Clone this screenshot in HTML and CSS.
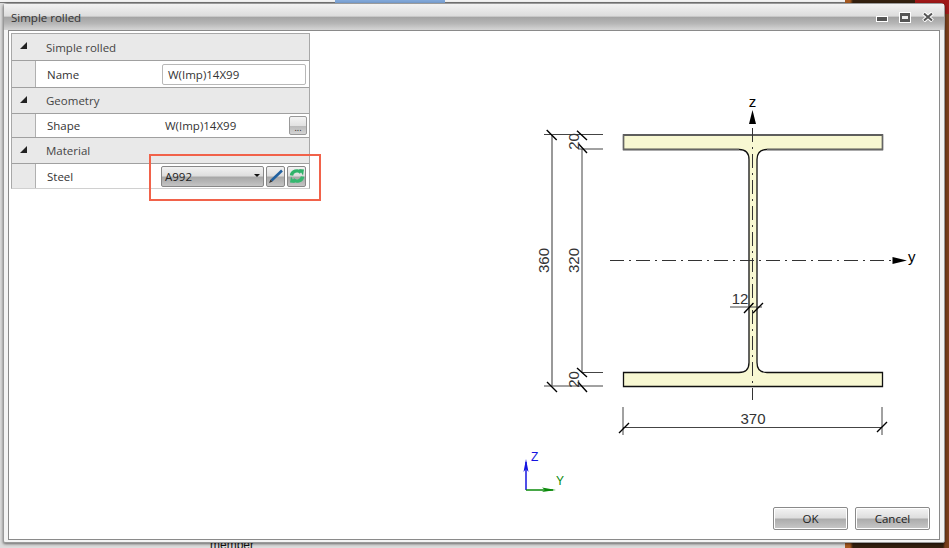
FILE: index.html
```html
<!DOCTYPE html>
<html lang="en">
<head>
<meta charset="utf-8">
<title>Simple rolled</title>
<link rel="stylesheet" href="styles.css">
</head>
<body>
<div class="desktop">
  <div class="bg-app"></div>
  <div class="bg-blue"></div>
  <div class="bg-brown"></div>
  <div class="bg-red"></div>
  <div class="bg-member">member</div>
  <div class="window">
    <header class="titlebar">
      <span class="title">Simple rolled</span>
      <div class="controls">
        <span class="ctl-min"></span>
        <span class="ctl-max"></span>
        <svg class="ctl-close" width="12" height="10" viewBox="0 0 12 10"><path d="M1.5 1 L10.5 9 M10.5 1 L1.5 9" stroke="#fff" stroke-width="4"/><path d="M2 1.5 L10 8.500 M10 1.500 L2 8.500" stroke="#555" stroke-width="2"/></svg>
      </div>
    </header>
    <main class="client">
      <section class="grid">
        <div class="group"><span class="tri"></span><span class="group-label">Simple rolled</span></div>
        <div class="row row-name"><span class="gutter"></span><span class="label">Name</span><div class="value"><span class="textbox">W(Imp)14X99</span></div></div>
        <div class="group group-mid"><span class="tri"></span><span class="group-label">Geometry</span></div>
        <div class="row row-shape"><span class="gutter"></span><span class="label">Shape</span><div class="value value-shape"><span class="plain">W(Imp)14X99</span><span class="dots">...</span></div></div>
        <div class="group group-last"><span class="tri"></span><span class="group-label">Material</span></div>
        <div class="row row-steel"><span class="gutter"></span><span class="label">Steel</span><div class="value value-steel">
          <span class="combo"><span>A992</span><span class="caret"></span></span>
          <span class="iconbtn"><svg width="16" height="16" viewBox="0 0 16 16"><path d="M3.500 12.500 L14 2.500" stroke="#1f5f9f" stroke-width="2.600"/><path d="M1 15 L2.500 11.500 L4.500 13.500 Z" fill="#333"/></svg></span>
          <span class="iconbtn iconbtn-green"><svg width="16" height="16" viewBox="0 0 16 16"><path d="M2.500 7.500 A5.500 5 0 0 1 12 4.500" fill="none" stroke="#2fb36a" stroke-width="3.400"/><path d="M10 1 L15 1.500 L14 7.500 Z" fill="#2fb36a"/><path d="M13.500 8.500 A5.500 5 0 0 1 4 11.500" fill="none" stroke="#35b870" stroke-width="3.400"/><path d="M6 15 L1 14.500 L2 8.500 Z" fill="#35b870"/></svg></span>
        </div></div>
      </section>
      <div class="highlight"></div>
      <svg class="drawing" width="949" height="548" viewBox="0 0 949 548" font-family="Liberation Sans, Arial, sans-serif">
        <path class="section" d="M623.500 135 H882.500 V149.500 H767 Q757 149.500 757 159.500 V362.500 Q757 372.500 767 372.500 H882.500 V386.500 H623.500 V372.500 H739 Q749 372.500 749 362.500 V159.500 Q749 149.500 739 149.500 H623.500 Z"/>
        <path class="flange-top" d="M739 149.500 H623.500 V135 H882.500 V149.500 H767"/>
        <path class="axis" d="M752.500 128 V400 M610 260.500 H893"/>
        <path class="dim" d="M582 149 V373 M623 427.500 H882 M730 307 H762 M544 134.500 H603 M578 149 H603 M582 372.500 H603 M544 386 H603 M623 407 V435 M882 407 V435"/>
        <path class="dim-heavy" d="M552 134 V386"/>
        <path class="tick" d="M546.700 130 L556.700 140 M577 130.700 L587 140 M578.700 144 L587 153 M577 368 L587 377 M547 382 L557 392 M578 382 L587 392 M619 433 L629 423 M877 432 L887 422 M744 313 L753.500 303 M753 313 L763 303"/>
        <path d="M752.500 110 L756 124 H749 Z M907 260.500 L892.500 257 V264 Z" fill="#000"/>
        <text x="752.500" y="107" class="t-axis" text-anchor="middle">z</text>
        <text x="908" y="262" class="t-axis">y</text>
        <text x="753" y="424" class="t-dim" text-anchor="middle">370</text>
        <text x="740" y="304" class="t-dim" text-anchor="middle">12</text>
        <text transform="translate(548.500 260.500) rotate(-90)" class="t-dim" text-anchor="middle">360</text>
        <text transform="translate(578.500 260.500) rotate(-90)" class="t-dim" text-anchor="middle">320</text>
        <text transform="translate(579 141.500) rotate(-90)" class="t-dim" text-anchor="middle">20</text>
        <text transform="translate(579 379.500) rotate(-90)" class="t-dim" text-anchor="middle">20</text>
        <path d="M526 490 V462" stroke="#1414e0" stroke-width="1.500"/>
        <path d="M526 459 L528.500 472 L526 469 L523.500 472 Z" fill="#1414e0"/>
        <path d="M526 490 H553" stroke="#0a8a0a" stroke-width="1.500"/>
        <path d="M556 490 L542 487.500 L545 490 L542 492 Z" fill="#0a8a0a"/>
        <text x="531" y="461" class="t-z">Z</text>
        <text x="556" y="485" class="t-y">Y</text>
      </svg>
      <footer class="actions">
        <button class="btn" type="button">OK</button>
        <button class="btn" type="button">Cancel</button>
      </footer>
    </main>
  </div>
</div>
</body>
</html>
```

FILE: styles.css
```css
* { box-sizing: border-box; }
html, body { margin: 0; height: 100%; overflow: hidden; }
body { font-family: "Open Sans", "Noto Sans", sans-serif; font-size: 12px; color: #222; }
.desktop { position: relative; width: 949px; height: 548px; background: #dcdcdc; overflow: hidden; }
.bg-app { position: absolute; left: 0; top: 0; width: 845px; height: 3px; background: #f2f2f2; border-bottom: 1px solid #777; }
.bg-blue { position: absolute; left: 335px; top: 0; width: 110px; height: 3px; background: #7fa6d8; }
.bg-brown { position: absolute; left: 845px; top: 0; width: 104px; height: 548px; background: linear-gradient(90deg, #a85a20 0, #a85a20 5px, #33200f 8px, #33200f 98px, #7a3f1c 100px); }
.bg-red { position: absolute; left: 915px; top: 0; width: 34px; height: 14px; background: #a01818; }
.bg-member { position: absolute; left: 210px; top: 538px; font-family: "Liberation Sans", sans-serif; font-size: 12px; color: #111; }
.window {
  position: absolute; left: 3px; top: 3px; width: 942px; height: 540px;
  background: #f4f4f4; border: 1px solid #9a9a9a; border-radius: 4px 4px 2px 2px;
  box-shadow: 0 1px 3px rgba(0,0,0,.55);
  display: flex; flex-direction: column;
}
.titlebar {
  height: 26px; flex: none; display: flex; align-items: center; justify-content: space-between;
  padding: 0 10px 0 7px;
  background: linear-gradient(180deg, #f2f2f2 0, #dcdcdc 47%, #a3a3a3 50%, #b6b6b6 75%, #d6d6d6 100%);
}
.title { font-size: 11.500px; color: #333; }
.controls { display: flex; align-items: center; gap: 11px; }
.ctl-min { flex: none; width: 12px; height: 6px; margin-top: 3px; background: #555; border: 1px solid #fff; }
.ctl-max { flex: none; width: 12px; height: 11px; background: #555; border: 1px solid #fff; position: relative; }
.ctl-max::after { content: ""; position: absolute; left: 2px; right: 2px; top: 3px; height: 3px; background: #eee; }
.ctl-close { flex: none; }
.client {
  position: relative; flex: 1; margin: 0 4px 2px 4px; background: #fff;
  border: 1px solid #8a8a8a; padding: 2px; 
}
.grid { width: 299px; border: 1px solid #a8a8a8; border-bottom-color: #d0d0d0; background: #fff; display: flex; flex-direction: column; }
.group { display: flex; align-items: center; height: 27px; background: #e9e9e9; border-bottom: 1px solid #a0a0a0; font-size: 11.500px; color: #444; }
.group-mid { border-top: 1px solid #a0a0a0; }
.group-last { border-top: 1px solid #a0a0a0; }
.tri { width: 0; height: 0; margin: 0 0 3px 8px; border-style: solid; border-width: 0 0 7px 7px; border-color: transparent transparent #222 transparent; flex: none; }
.group-label { margin-left: 19px; }
.row { display: flex; align-items: center; background: #fff; font-size: 11.500px; }
.row-name { height: 26px; }
.row-shape { height: 23px; }
.row-steel { height: 24px; }
.gutter { width: 24px; height: 100%; background: #e9e9e9; border-right: 1px solid #b0b0b0; flex: none; }
.label { width: 125px; padding-left: 11px; color: #333; flex: none; }
.value { flex: 1; display: flex; align-items: center; padding-right: 2px; }
.textbox { width: 144px; height: 21px; margin-left: 1px; padding: 0 5px; line-height: 19px; border: 1px solid #b8b8b8; border-radius: 2px; font-size: 11.500px; color: #333; }
.value-shape { justify-content: space-between; padding-left: 4px; padding-right: 2px; }
.plain { color: #333; }
.dots { width: 18px; height: 19px; border: 1px solid #999; border-radius: 2px; text-align: center; font-size: 9px; line-height: 22px; background: linear-gradient(180deg, #f4f4f4 0, #e2e2e2 50%, #b9b9b9 52%, #d4d4d4 100%); }
.value-steel { gap: 2px; }
.combo { width: 103px; height: 21px; padding: 0 3px; display: flex; align-items: center; justify-content: space-between; border: 1px solid #888; border-radius: 2px; background: linear-gradient(180deg, #f2f2f2 0, #dedede 45%, #a8a8a8 55%, #c4c4c4 100%); color: #222; font-size: 11.500px; }
.caret { width: 0; height: 0; border-style: solid; border-width: 3px 3px 0 3px; border-color: #111 transparent transparent transparent; margin-top: -2px; }
.iconbtn { width: 19px; height: 21px; display: flex; align-items: center; justify-content: center; border: 1px solid #888; border-radius: 2px; background: linear-gradient(180deg, #f2f2f2 0, #dedede 45%, #a8a8a8 55%, #c4c4c4 100%); }
.highlight { position: absolute; left: 140px; top: 123px; width: 172px; height: 47px; border: 2px solid #f1624a; }
.drawing { position: absolute; left: -9px; top: -31px; pointer-events: none; }
.section { fill: #f8f8d2; stroke: #111; stroke-width: 1.300; }
.flange-top { fill: none; stroke: #666; stroke-width: 1.300; }
.axis { fill: none; stroke: #333; stroke-width: 1; stroke-dasharray: 14 5 2 5; }
.dim { fill: none; stroke: #444; stroke-width: 1; }
.dim-heavy { fill: none; stroke: #777; stroke-width: 1.500; }
.tick { fill: none; stroke: #000; stroke-width: 1.400; }
.t-axis { font-size: 15px; fill: #000; }
.t-dim { font-size: 15px; fill: #333; }
.t-z { font-size: 12px; fill: #1414e0; }
.t-y { font-size: 12px; fill: #0a8a0a; }
.actions { position: absolute; right: 9px; bottom: 9px; display: flex; gap: 7px; }
.btn { width: 75px; height: 23px; padding: 0; border: 1px solid #8a8a8a; border-radius: 2px; box-shadow: inset 0 0 0 1px #fff; font: 11.500px "Open Sans", sans-serif; color: #222; background: linear-gradient(180deg, #f4f4f4 0, #dedede 47%, #acacac 53%, #c8c8c8 100%); }
```
